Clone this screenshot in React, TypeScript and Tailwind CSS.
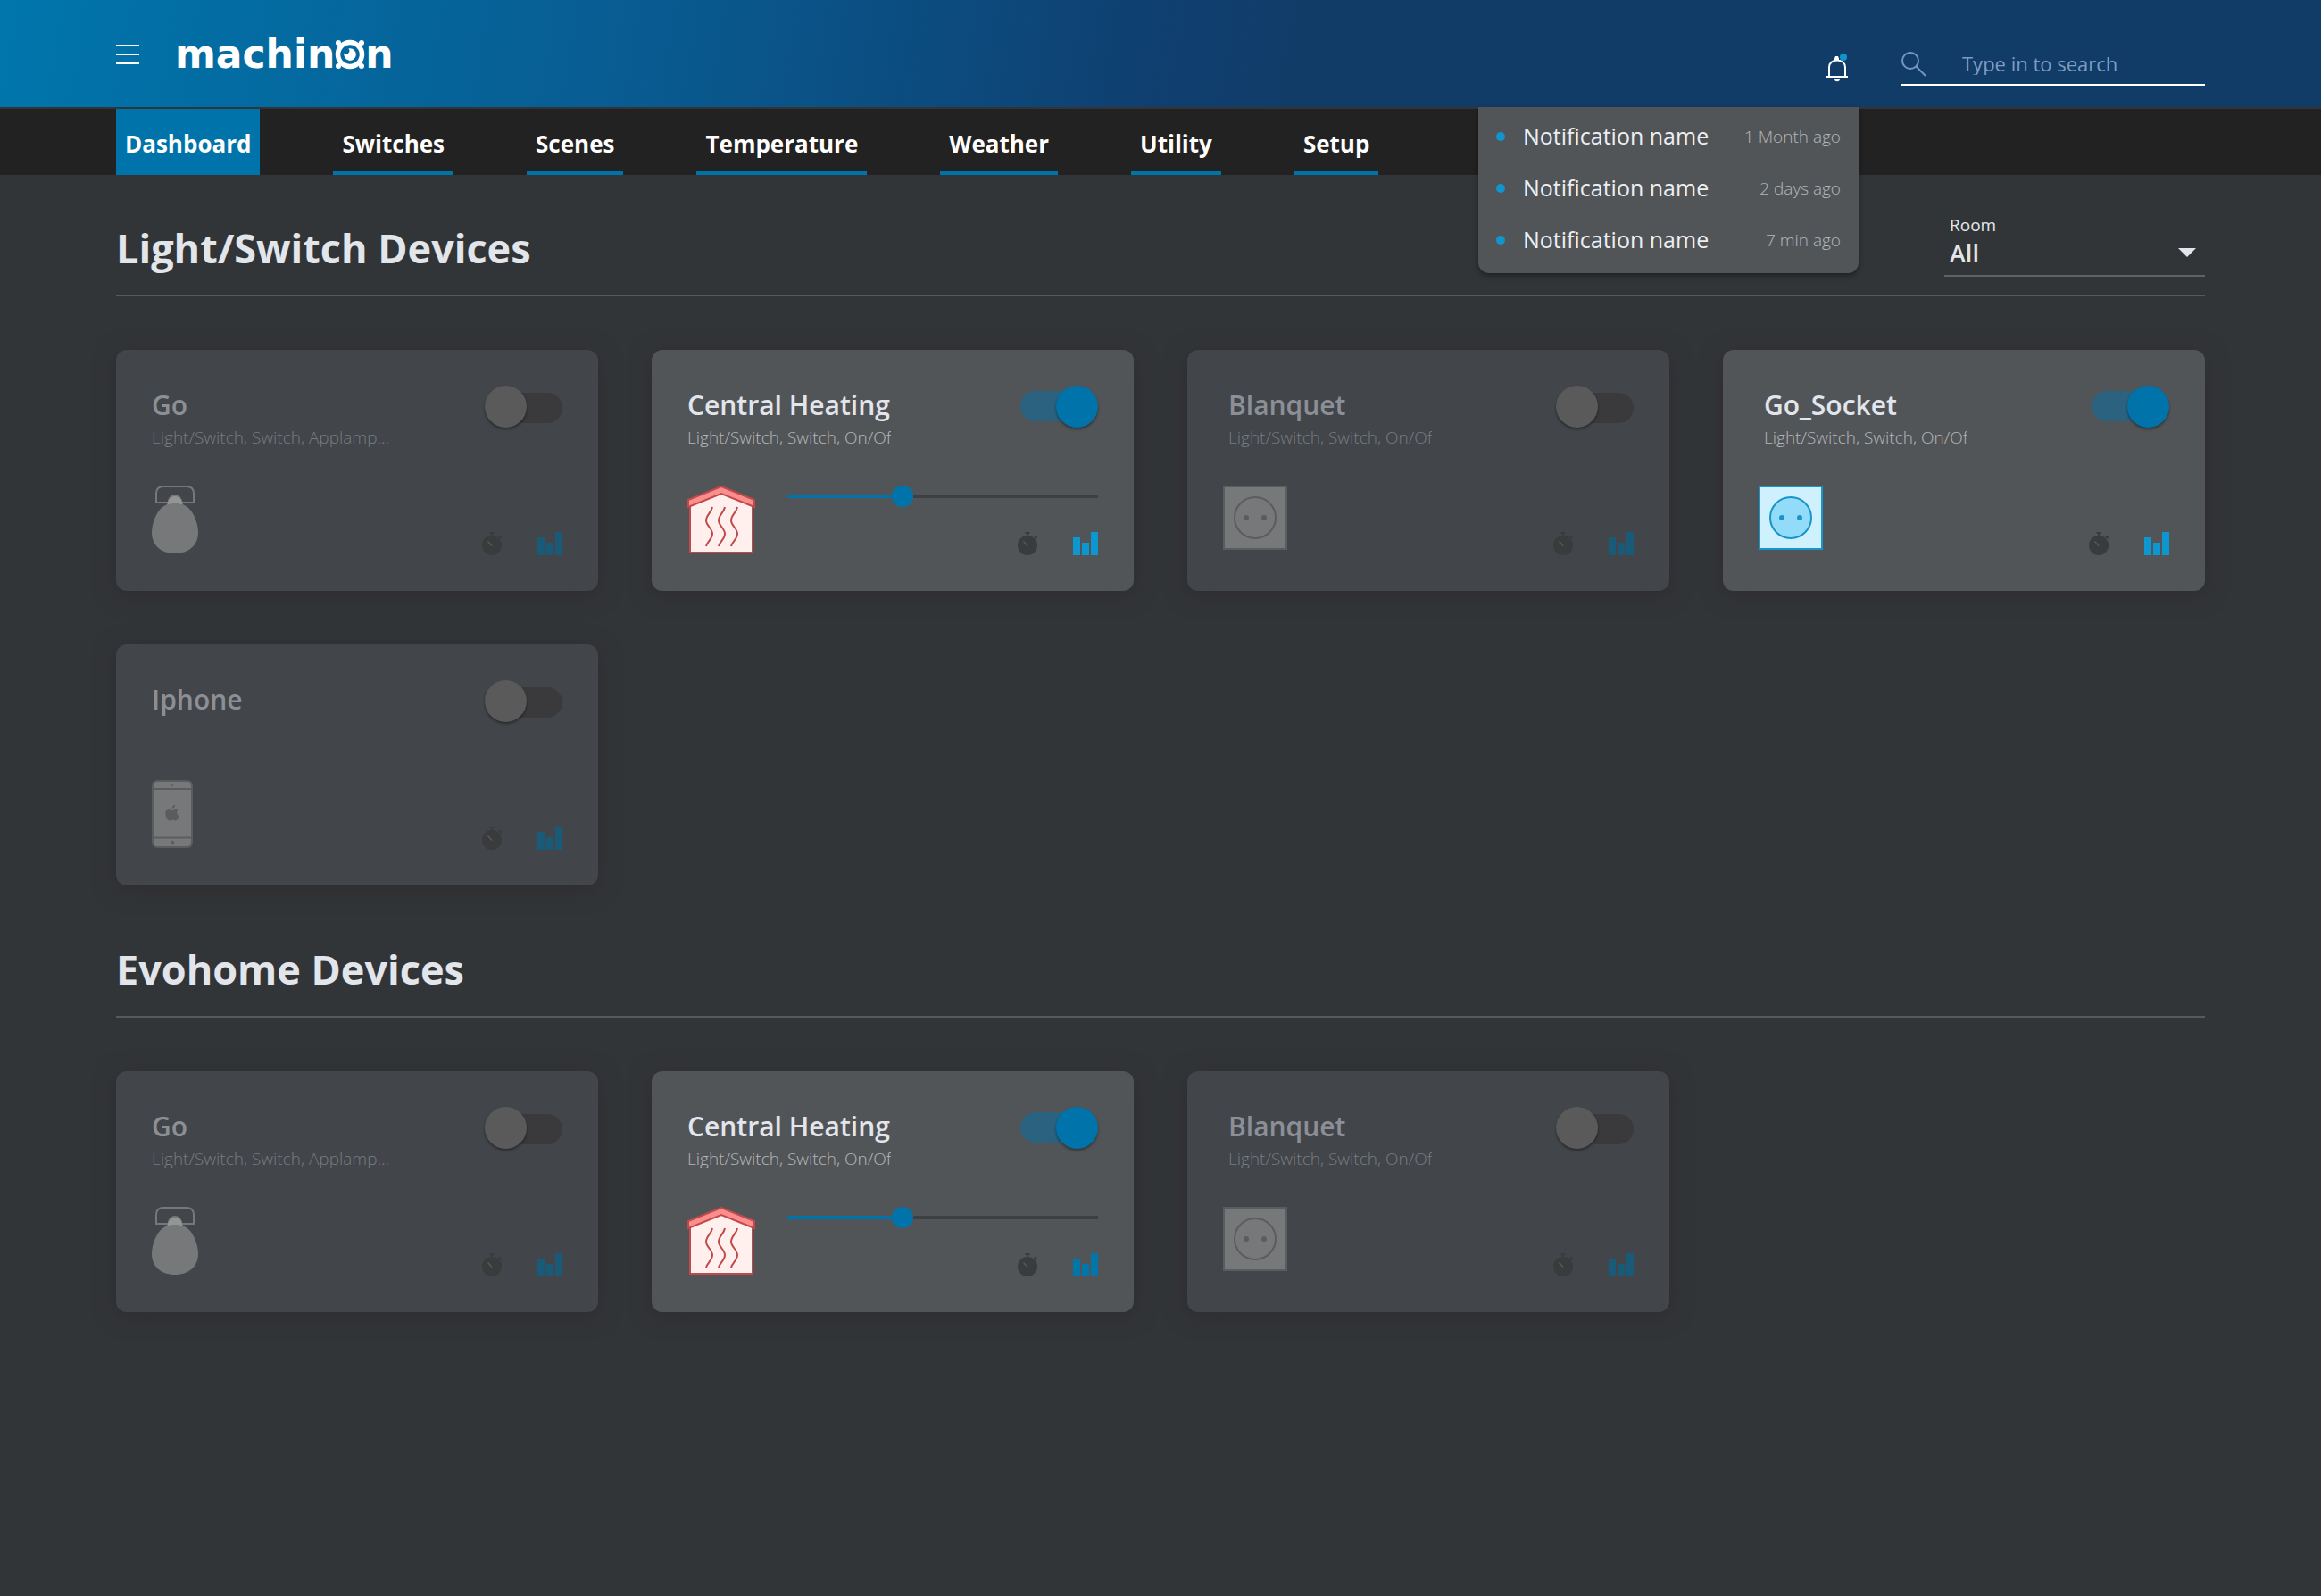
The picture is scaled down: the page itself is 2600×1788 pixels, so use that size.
import React, { useState } from "react";
import clsx from "clsx";

type DeviceKind = "lamp" | "heating" | "socket" | "phone";

interface Device {
    name: string;
    type?: string;
    kind: DeviceKind;
    on?: boolean;
    level?: number;
}

const navItems = ["Dashboard", "Switches", "Scenes", "Temperature", "Weather", "Utility", "Setup"];

const notifications = [
    { name: "Notification name", time: "1 Month ago" },
    { name: "Notification name", time: "2 days ago" },
    { name: "Notification name", time: "7 min ago" },
];

const lightDevices: Device[] = [
    { name: "Go", type: "Light/Switch, Switch, Applamp...", kind: "lamp" },
    { name: "Central Heating", type: "Light/Switch, Switch, On/Of", kind: "heating", on: true, level: 36 },
    { name: "Blanquet", type: "Light/Switch, Switch, On/Of", kind: "socket" },
    { name: "Go_Socket", type: "Light/Switch, Switch, On/Of", kind: "socket", on: true },
    { name: "Iphone", kind: "phone" },
];

const evohomeDevices: Device[] = [
    { name: "Go", type: "Light/Switch, Switch, Applamp...", kind: "lamp" },
    { name: "Central Heating", type: "Light/Switch, Switch, On/Of", kind: "heating", on: true, level: 36 },
    { name: "Blanquet", type: "Light/Switch, Switch, On/Of", kind: "socket" },
];

function Logo() {
    return (
        <a
            href="#"
            aria-label="machinon"
            className="flex items-center font-['DejaVu_Sans',sans-serif] text-[44px] leading-[44px] font-bold text-white"
        >
            <span>machin</span>
            <svg viewBox="0 0 34 34" className="size-[34px]" fill="none">
                <circle cx="17" cy="17" r="13.5" stroke="#fff" strokeWidth="5.5" />
                <circle cx="4" cy="4" r="3" fill="#fff" />
                <circle cx="30" cy="4" r="3" fill="#fff" />
                <circle cx="4" cy="30" r="3" fill="#fff" />
                <circle cx="30" cy="30" r="3" fill="#fff" />
                <path d="M17 10.3a6.8 6.8 0 1 1-6.6 5.2 3.4 3.4 0 0 0 4.9-4.9 6.8 6.8 0 0 1 1.700-.3z" fill="#fff" />
            </svg>
            <span>n</span>
        </a>
    );
}

function BellIcon() {
    return (
        <svg viewBox="0 0 24 32" className="h-8 w-6" fill="none">
            <path d="M3 26V15.500C3 11 6.500 7.500 12 7.500S21 11 21 15.500V26" stroke="#fff" strokeWidth="2" />
            <path d="M0 26h24" stroke="#fff" strokeWidth="2" />
            <path d="M9 8V5.500L10 3h3l1 2.500V8z" fill="#fff" />
            <path d="M9 28.500h6a3 2.800 0 0 1-6 0z" fill="#fff" />
            <circle cx="19" cy="4" r="4" fill="#1195ce" />
        </svg>
    );
}

function SearchIcon() {
    return (
        <svg viewBox="0 0 28 28" className="size-7 shrink-0" fill="none" stroke="#7597c0" strokeWidth="2">
            <circle cx="10" cy="10" r="9" />
            <path d="M16.500 16.500L27 27" />
        </svg>
    );
}

function StopwatchIcon() {
    return (
        <svg viewBox="0 0 22 26" className="h-[26px] w-[22px]">
            <circle cx="11" cy="15" r="11" fill="#3a3b3d" />
            <path d="M8.500 0h5v2H12v3h-2V2H8.500z" fill="#3a3b3d" />
            <path d="M18 5.500l2-2 2.500 3-1.500 1.500z" fill="#3a3b3d" />
            <path d="M6.500 10.500l4.500 5" stroke="#56585a" strokeWidth="1.500" />
        </svg>
    );
}

function ChartIcon({ className }: { className: string }) {
    return (
        <svg viewBox="0 0 28 26" className={clsx("h-[26px] w-7", className)}>
            <rect x="0" y="6" width="8" height="20" />
            <rect x="10" y="12" width="8" height="14" />
            <rect x="20" y="0" width="8" height="26" />
        </svg>
    );
}

function LampIcon() {
    return (
        <svg viewBox="0 0 52 76" className="h-[76px] w-[52px]" fill="none">
            <path d="M5 19V9q0-8 8-8h26q8 0 8 8v10z" stroke="#77787a" strokeWidth="2" />
            <path d="M16 24l2-7c1-4 4-7 8-7s7 3 8 7l2 7z" fill="#77787a" />
            <path d="M18 21c0-5 3-9 8-9s8 4 8 9z" fill="#949597" />
            <path d="M26 20c6 0 12 1 17 7 6 7 9 18 9 26 0 14-11 23-26 23S0 67 0 53c0-8 3-19 9-26 5-6 11-7 17-7z" fill="#77787a" />
        </svg>
    );
}

function HeatingIcon() {
    return (
        <svg viewBox="0 0 76 76" className="size-[76px]" fill="none" stroke="#c0494b" strokeWidth="2">
            <path d="M3 22L38 6l35 16v53H3z" fill="#fff0ee" />
            <path d="M1 16L38 1l37 15v8L38 9 1 24z" fill="#fb8d8c" />
            {[0, 14, 28].map((x) => (
                <path key={x} d={`M${28 + x} 24c-1 6-7 9-7 15s7 9 7 15-6 9-7 14`} />
            ))}
        </svg>
    );
}

function SocketIcon({ on }: { on?: boolean }) {
    return (
        <svg viewBox="0 0 72 72" className="size-[72px]" stroke={on ? "#1795c9" : "#5b5c5f"} strokeWidth="2">
            <rect x="1" y="1" width="70" height="70" fill={on ? "#cff1fe" : "#77787a"} />
            <circle cx="36" cy="36" r="23" fill={on ? "#92dcf9" : "#77787a"} />
            <circle cx="26" cy="36" r="2" fill={on ? "#1795c9" : "#5b5c5f"} />
            <circle cx="46" cy="36" r="2" fill={on ? "#1795c9" : "#5b5c5f"} />
        </svg>
    );
}

function PhoneIcon() {
    return (
        <svg viewBox="0 0 46 76" className="h-[76px] w-[46px]" fill="none">
            <rect x="1" y="1" width="44" height="74" rx="5" fill="#77787a" stroke="#5b5c5f" strokeWidth="2" />
            <path d="M1 10h44M1 64.500h44" stroke="#5b5c5f" strokeWidth="2" />
            <circle cx="23" cy="5.500" r="1.200" fill="#5b5c5f" />
            <circle cx="23" cy="70" r="2.200" fill="#5b5c5f" />
            <path
                d="M23 33.200c1.300 0 2.300-1.200 4.100-1.200 1.100 0 2.300.6 3 1.600-2.800 1.700-2.300 5.500.5 6.600-.6 2-2.300 5.300-4.200 5.300-1.200 0-1.700-.7-3.200-.7s-2 .7-3.200.7c-2.200 0-4.600-4.400-4.600-8 0-3.400 2-5.500 4.300-5.500 1.400 0 2.400 1.200 3.300 1.200zM22.800 31.800c-.1-2 1.500-3.800 3.300-4 .3 2.100-1.500 4-3.300 4z"
                fill="#5b5c5f"
            />
        </svg>
    );
}

function DeviceIcon({ kind, on }: { kind: DeviceKind; on?: boolean }) {
    if (kind === "lamp") return <LampIcon />;
    if (kind === "heating") return <HeatingIcon />;
    if (kind === "phone") return <PhoneIcon />;
    return <SocketIcon on={on} />;
}

function Toggle({ label, checked, onChange }: { label: string; checked: boolean; onChange: () => void }) {
    return (
        <input
            type="checkbox"
            role="switch"
            aria-label={label}
            checked={checked}
            onChange={onChange}
            className="relative h-12 w-[87px] shrink-0 cursor-pointer appearance-none before:absolute before:inset-x-0 before:top-2 before:h-[34px] before:rounded-full before:bg-[#3a3a3d] after:absolute after:top-0 after:left-0 after:size-[47px] after:rounded-full after:bg-[#5a5a5a] after:shadow-[0_2px_3px_rgba(0,0,0,0.4)] checked:before:top-1.5 checked:before:bg-[#2a6280] checked:after:left-10 checked:after:bg-[#0074aa]"
        />
    );
}

function LevelSlider({ label, initial }: { label: string; initial: number }) {
    const [level, setLevel] = useState(initial);
    return (
        <input
            type="range"
            aria-label={label}
            value={level}
            onChange={(e) => setLevel(Number(e.target.value))}
            style={{ backgroundImage: `linear-gradient(to right, #0074aa ${level}%, #3d4043 ${level}%)` }}
            className="mt-2.5 h-1 w-full cursor-pointer appearance-none [&::-webkit-slider-thumb]:size-6 [&::-webkit-slider-thumb]:appearance-none [&::-webkit-slider-thumb]:rounded-full [&::-webkit-slider-thumb]:bg-[#0074aa]"
        />
    );
}

function DeviceCard({ device, chartClass }: { device: Device; chartClass: string }) {
    const [on, setOn] = useState(!!device.on);

    return (
        <article
            className={clsx(
                "flex flex-col gap-10 rounded-xl p-10 shadow-[0_4px_24px_rgba(45,35,40,0.5)]",
                on ? "bg-[#525558]" : "bg-[#42454a]"
            )}
        >
            <div className="flex min-h-[72px] items-start justify-between">
                <div className={clsx("min-w-0", device.kind === "socket" && "pl-1.5")}>
                    <h3 className={clsx("truncate text-[30px] leading-[44px] font-semibold", on ? "text-[#e2e6ec]" : "text-[#8c8f95]")}>
                        {device.name}
                    </h3>
                    {device.type && (
                        <p className={clsx("truncate text-[19px] leading-7 font-light", on ? "text-[#b4b7ba]" : "text-[#797c80]")}>
                            {device.type}
                        </p>
                    )}
                </div>
                <Toggle label={device.name} checked={on} onChange={() => setOn(!on)} />
            </div>

            <div className="flex min-h-[78px] items-start gap-9">
                <DeviceIcon kind={device.kind} on={on} />
                <div className="flex h-[78px] grow flex-col">
                    {device.level !== undefined && <LevelSlider label={`${device.name} level`} initial={device.level} />}
                    <div className="mt-auto flex justify-end gap-10">
                        <button type="button" aria-label="Timers" className="cursor-pointer">
                            <StopwatchIcon />
                        </button>
                        <button type="button" aria-label="Log" className="cursor-pointer">
                            <ChartIcon className={on ? chartClass : "fill-[#195a79]"} />
                        </button>
                    </div>
                </div>
            </div>
        </article>
    );
}

function DeviceGrid({ devices, chartClass }: { devices: Device[]; chartClass: string }) {
    return (
        <div className="grid grid-cols-1 gap-[60px] pt-[60px] md:grid-cols-2 xl:grid-cols-4">
            {devices.map((device) => (
                <DeviceCard key={device.name} device={device} chartClass={chartClass} />
            ))}
        </div>
    );
}

function Notifications() {
    return (
        <div className="relative">
            <button type="button" aria-label="Notifications" className="block cursor-pointer">
                <BellIcon />
            </button>
            <ul className="absolute top-full -right-3 z-10 mt-7 w-[426px] rounded-b-xl bg-[#525558] px-5 pt-1 pb-2 shadow-[0_3px_6px_rgba(0,0,0,0.4)]">
                {notifications.map((n) => (
                    <li key={n.time} className="flex h-[58px] items-center whitespace-nowrap">
                        <span className="mr-5 size-2.5 rounded-full bg-[#1195ce]" />
                        <span className="text-[25px] text-[#eceff2]">{n.name}</span>
                        <span className="ml-auto text-[19px] font-light text-[#b4b7ba]">{n.time}</span>
                    </li>
                ))}
            </ul>
        </div>
    );
}

export default function App() {
    return (
        <div className="min-h-screen bg-[#323538] pb-20 font-['Open_Sans','Noto_Sans',sans-serif]">
            <header className="flex h-[120px] justify-between bg-[linear-gradient(100deg,#0076ac_0%,#085c92_27%,#0f3f70_50%,#113c68_56%)] px-[130px]">
                <div className="flex items-center gap-10 pt-0.5">
                    <button type="button" aria-label="Menu" className="flex w-[26px] cursor-pointer flex-col gap-2">
                        <span className="h-0.5 bg-white" />
                        <span className="h-0.5 bg-white" />
                        <span className="h-0.5 bg-white" />
                    </button>
                    <Logo />
                </div>
                <div className="flex items-center gap-[60px] self-end pb-6">
                    <Notifications />
                    <label className="flex h-10 w-[340px] items-start border-b-2 border-white pt-0.5">
                        <SearchIcon />
                        <input
                            type="search"
                            aria-label="Search"
                            placeholder="Type in to search"
                            className="ml-10 h-[26px] min-w-0 grow bg-transparent text-[22px] text-white outline-none placeholder:text-[#7d9cc2]"
                        />
                    </label>
                </div>
            </header>

            <nav className="mt-0.5 flex h-[74px] gap-[82px] bg-[#222222] px-[130px]">
                {navItems.map((item, index) => (
                    <a
                        key={item}
                        href="#"
                        aria-current={index === 0 ? "page" : undefined}
                        className={clsx(
                            "flex items-center border-b-4 border-[#0074aa] px-2.5 pt-2 text-[26px] font-bold text-white",
                            index === 0 && "bg-[#0074aa]"
                        )}
                    >
                        {item}
                    </a>
                ))}
            </nav>

            <main className="px-[130px]">
                <section className="pt-11">
                    <div className="flex items-end justify-between border-b-2 border-[#58595b] pb-5">
                        <h2 className="text-[45px] leading-[64px] font-bold text-[#e2e5ea]">Light/Switch Devices</h2>
                        <div className="relative flex w-[292px] flex-col border-b-2 border-[#5f6163] text-[#e2e5ea]">
                            <label htmlFor="room" className="px-1.5 text-[19px] leading-6">
                                Room
                            </label>
                            <select
                                id="room"
                                defaultValue="All"
                                className="h-11 cursor-pointer appearance-none bg-transparent px-1.5 pb-1.5 text-[27px] font-semibold outline-none"
                            >
                                <option>All</option>
                            </select>
                            <svg viewBox="0 0 20 10" className="pointer-events-none absolute right-2.5 bottom-5 h-2.5 w-5 fill-[#e2e5ea]">
                                <path d="M0 0h20L10 10z" />
                            </svg>
                        </div>
                    </div>
                    <DeviceGrid devices={lightDevices} chartClass="fill-[#0c97d0]" />
                </section>

                <section className="pt-[62px]">
                    <div className="border-b-2 border-[#58595b] pb-5">
                        <h2 className="text-[45px] leading-[64px] font-bold text-[#e2e5ea]">Evohome Devices</h2>
                    </div>
                    <DeviceGrid devices={evohomeDevices} chartClass="fill-[#0076ab]" />
                </section>
            </main>
        </div>
    );
}
